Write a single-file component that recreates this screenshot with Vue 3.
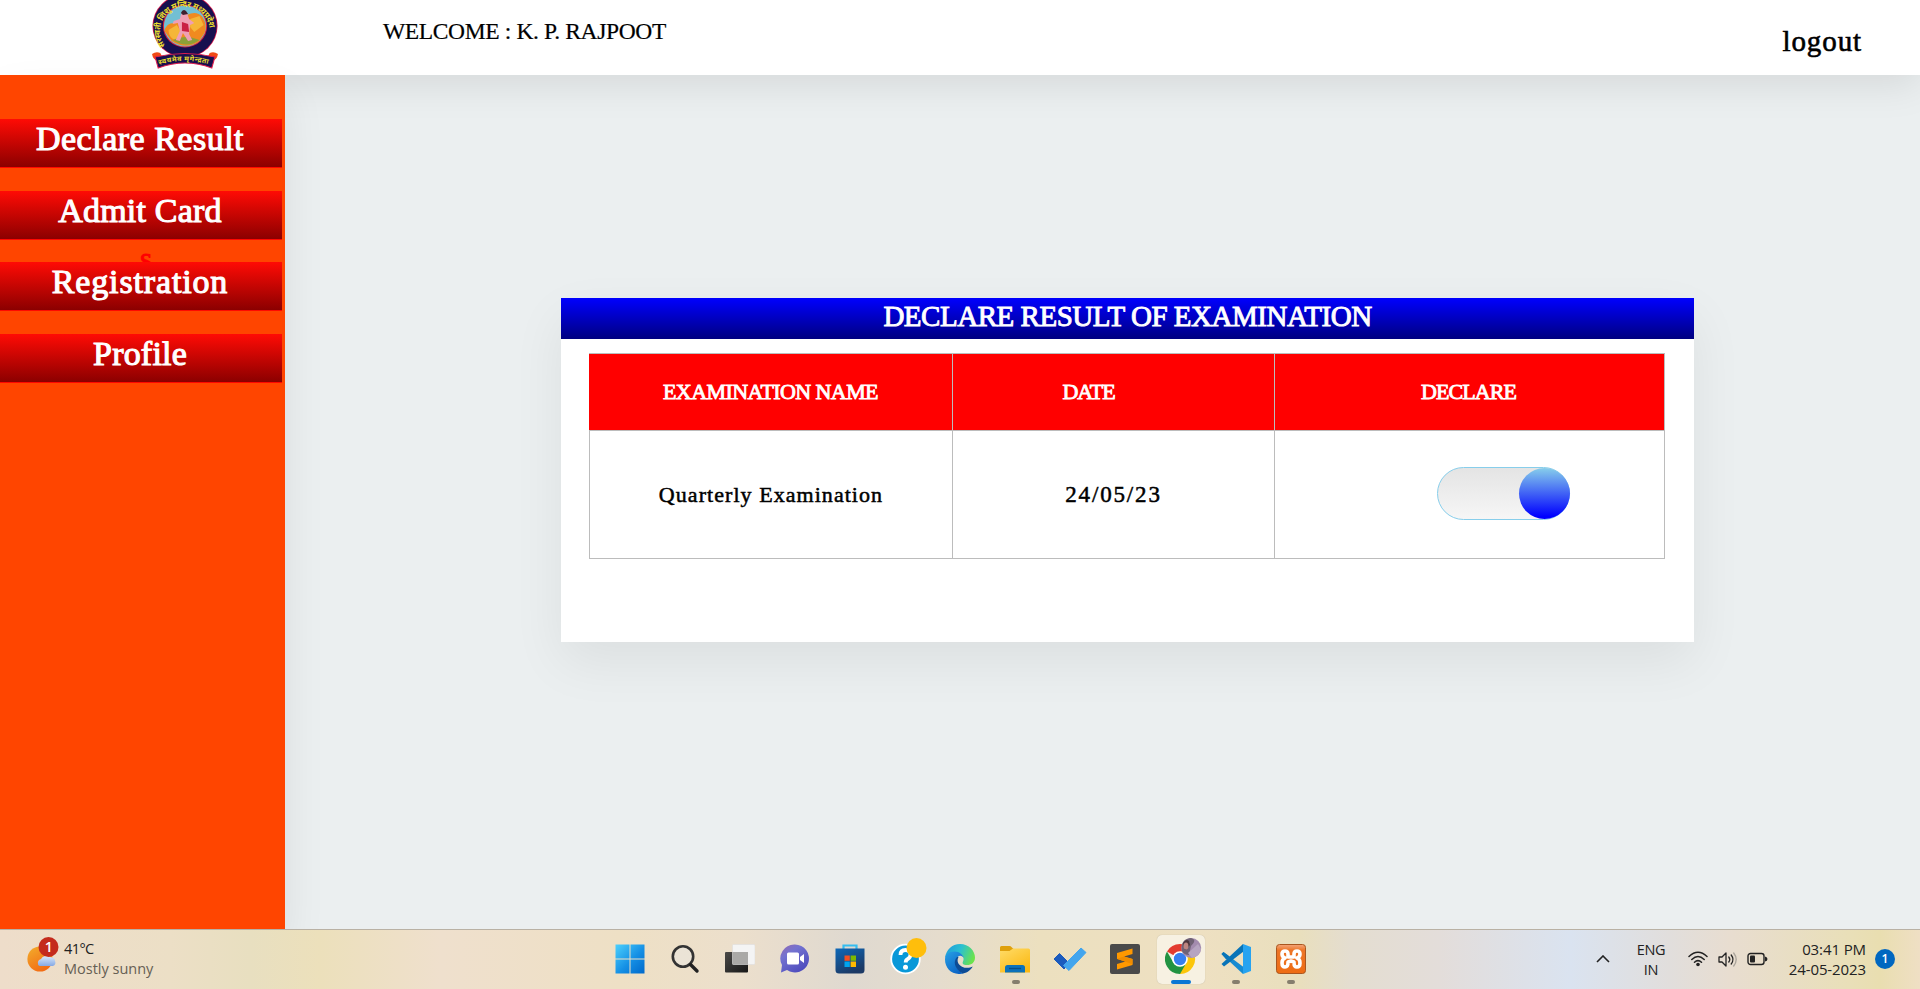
<script setup>
const menu = [
  { label: 'Declare Result', cls: 'm1' },
  { label: 'Admit Card', cls: 'm2' },
  { label: 'Registration', cls: 'm3' },
  { label: 'Profile', cls: 'm4' },
]
</script>

<template>
  <div class="page">
    <header class="top">
      <svg class="logo" width="68" height="70" viewBox="0 0 66 70" preserveAspectRatio="none">
        <defs>
          <path id="ring" d="M13.9 45.6A24 24 0 1 1 51.9 45.6" />
          <path id="band" d="M8 65Q33 57 59 65" />
        </defs>
        <circle cx="33" cy="26" r="31.6" fill="#d8174a" />
        <circle cx="33" cy="26" r="30.8" fill="#17104f" />
        <circle cx="33" cy="26" r="21.5" fill="#d91c3a" />
        <circle cx="33" cy="26" r="20.5" fill="#72bfd3" />
        <path d="M13 31Q15 22 24 23L35 15Q44 10 50 17Q55 25 52 33L46 42Q33 50 20 41Z" fill="#f08a20" />
        <path d="M17 30l8-5 5 8-5 8q-8-3-8-11M38 19l9-3 4 9-9 7-4-5Z" fill="#f5b638" />
        <path d="M21 40q12-6 26 0-12 9-26 0" fill="#8ca038" />
        <path d="M29 15q2-5 6-2l2 6 5 4-4 2-1 9 3 6-4 1-5-8-3 8-4-1 4-9-2-8-5 1 1-3 6-2Z" fill="#ef9fb5" />
        <path d="M29 13q2-5 5-2l2 3-5 1Z" fill="#41202f" />
        <path d="M30 22l6 2 1 8-7-1Z" fill="#ca2045" />
        <text class="ring-text"><textPath href="#ring" textLength="88">सरस्वती शिशु मन्दिर मध्यप्रदेश</textPath></text>
        <path d="M1 54q4-3 8-1l3 6-6 1q-4 0-5-6M65 54q-4-3-8-1l-3 6 6 1q4 0 5-6" fill="#f04a16" />
        <path d="M4 57Q33 50 62 57L59 68Q33 58 7 68Z" fill="#17104f" stroke="#e01d4f" stroke-width="1" />
        <text class="band-text"><textPath href="#band" textLength="48">स्वयमेव मृगेन्द्रता</textPath></text>
      </svg>
      <div class="welcome">WELCOME : K. P. RAJPOOT</div>
      <a class="logout">logout</a>
    </header>

    <div class="body">
      <aside class="side">
        <span class="stray">s</span>
        <a v-for="m in menu" :key="m.label" class="btn" :class="m.cls"><span>{{ m.label }}</span></a>
      </aside>
      <main class="main">
        <section class="card">
          <h1><span>DECLARE RESULT OF EXAMINATION</span></h1>
          <div class="table">
            <div class="th c1">EXAMINATION NAME</div>
            <div class="th c2">DATE</div>
            <div class="th c3">DECLARE</div>
            <div class="td q">Quarterly Examination</div>
            <div class="td d">24/05/23</div>
            <div class="td t"><div class="toggle"><i></i></div></div>
          </div>
        </section>
      </main>
    </div>

    <footer class="bar">
      <div class="weather">
        <svg width="34" height="38" viewBox="0 0 34 38">
          <defs>
            <linearGradient id="sun" x1="0" y1="0" x2=".6" y2="1"><stop offset="0" stop-color="#f2ae2c" /><stop offset="1" stop-color="#f36b14" /></linearGradient>
            <linearGradient id="cl" x1="0" y1="0" x2="0" y2="1"><stop offset="0" stop-color="#dcebfb" /><stop offset="1" stop-color="#86a9e4" /></linearGradient>
          </defs>
          <circle cx="14" cy="23" r="12.6" fill="url(#sun)" />
          <path d="M12 28a4 4 0 0 1 3-5 6 6 0 0 1 9-2q5 0 5 4a3.400 3.400 0 0 1-2 5H15q-3 0-3-2" fill="url(#cl)" />
          <circle cx="22.500" cy="11" r="10" fill="#c42b1c" />
          <text x="22.700" y="16" text-anchor="middle" class="badge">1</text>
        </svg>
        <div class="wtext"><b>41°C</b><span>Mostly sunny</span></div>
      </div>

      <div class="apps">
        <div class="app">
          <svg width="30" height="30" viewBox="0 0 30 30">
            <defs><linearGradient id="win" x1="0" y1="0" x2="1" y2="1"><stop offset="0" stop-color="#4cd0fc" /><stop offset=".55" stop-color="#1590e5" /><stop offset="1" stop-color="#0069cb" /></linearGradient></defs>
            <path d="M.5.500h14v14H.5zM15.500.500h14v14h-14zM.5 15.500h14v14H.5zM15.500 15.500h14v14h-14z" fill="url(#win)" />
          </svg>
        </div>
        <div class="app">
          <svg width="30" height="30" viewBox="0 0 30 30"><circle cx="13" cy="12.500" r="10.200" fill="#e9e6df" fill-opacity=".6" stroke="#333" stroke-width="2.600" /><path d="M20.500 20.500l6.500 6.500" stroke="#222" stroke-width="3.400" stroke-linecap="round" /></svg>
        </div>
        <div class="app">
          <svg width="30" height="30" viewBox="0 0 30 30">
            <defs><linearGradient id="tv" x1="0" y1="0" x2="1" y2="1"><stop offset="0" stop-color="#4b4a48" /><stop offset="1" stop-color="#171717" /></linearGradient></defs>
            <rect x="0" y="8" width="23" height="20.500" rx="1" fill="url(#tv)" /><rect x="7.500" y=".5" width="22.500" height="20" rx="1" fill="#f4f4f4" stroke="#ddd" stroke-width=".6" /><rect x="7.500" y="8" width="15.500" height="12.500" fill="#aaa9a7" />
          </svg>
        </div>
        <div class="app">
          <svg width="30" height="30" viewBox="0 0 30 30">
            <defs><linearGradient id="chat" x1="0" y1="0" x2=".7" y2="1"><stop offset="0" stop-color="#9569b0" /><stop offset=".35" stop-color="#7473d0" /><stop offset="1" stop-color="#4d4bbd" /></linearGradient></defs>
            <path d="M15 .5a14 14 0 1 1-8 25.500L1 28.500 2 21A14 14 0 0 1 15 .5" fill="url(#chat)" /><rect x="7" y="8.500" width="12" height="12" rx="1.500" fill="#fff" /><path d="M20 13l4-3v9l-4-3Z" fill="#fff" />
          </svg>
        </div>
        <div class="app">
          <svg width="30" height="30" viewBox="0 0 30 30">
            <defs><linearGradient id="store" x1="0" y1="0" x2=".5" y2="1"><stop offset="0" stop-color="#0d68b8" /><stop offset="1" stop-color="#1c3965" /></linearGradient></defs>
            <path d="M8.500 6V1.500h13V6" fill="none" stroke="#35bdf0" stroke-width="2.200" /><path d="M.5 4.500h29V26q0 3.500-3.500 3.500H4Q.5 29.500.5 26Z" fill="url(#store)" />
            <path d="M9.500 11.500h5.300v5.300H9.500z" fill="#f25022" /><path d="M15.600 11.500H21v5.300h-5.400z" fill="#7fba00" /><path d="M9.500 17.500h5.300V23H9.500z" fill="#00a4ef" /><path d="M15.600 17.500H21V23h-5.400z" fill="#ffb900" />
          </svg>
        </div>
        <div class="app">
          <svg class="help" width="38" height="38" viewBox="0 0 38 38">
            <circle cx="15.500" cy="22" r="14.300" fill="#0998d8" stroke="#fff" stroke-width="1.800" />
            <path d="M10.500 18q0-5 5-5t5 4.500q0 3-2.800 4.500-2 1-2 3.500" fill="none" stroke="#fff" stroke-width="3.800" /><circle cx="15.500" cy="30.300" r="2.500" fill="#fff" />
            <circle cx="26.500" cy="11" r="10" fill="#ffbe0b" />
          </svg>
        </div>
        <div class="app">
          <svg width="30" height="30" viewBox="0 0 30 30">
            <defs>
              <linearGradient id="e1" x1="0" y1=".2" x2="1" y2=".5"><stop offset="0" stop-color="#1e9bdc" /><stop offset=".5" stop-color="#2bc0d0" /><stop offset="1" stop-color="#6be34b" /></linearGradient>
              <linearGradient id="e2" x1="0" y1="0" x2=".7" y2="1"><stop offset="0" stop-color="#27a0e6" /><stop offset="1" stop-color="#0b62c4" /></linearGradient>
            </defs>
            <path d="M0 14C1 6 7 0 15 0c9 0 15 7 15 13.500 0 5-3.500 7.500-8 7.500-4 0-5-1.500-4-3.500 2-4-1-8.500-6.500-8.500C6 9 2 11 0 14" fill="url(#e1)" />
            <path d="M0 15.500C0 11 4 7.500 9.500 7.500c5 0 9 3.500 9.500 7-1-2.500-4-3.500-5.800-2-4.700 4-3.700 12 5.300 17C8 32 0 25 0 15.500" fill="url(#e2)" />
            <path d="M12 13c-4 4-3 12 6 16.500 5-.8 8-4 9.700-7-2.700 1.500-7 2-10.700.2-4-2-5.500-6-3.500-9.700" fill="#0d4c96" />
          </svg>
        </div>
        <div class="app">
          <svg width="30" height="30" viewBox="0 0 30 30">
            <defs><linearGradient id="fold" x1="0" y1="0" x2=".7" y2="1"><stop offset="0" stop-color="#ffdc68" /><stop offset="1" stop-color="#fbb914" /></linearGradient></defs>
            <path d="M0 9V3.500Q0 2 1.500 2h8q1.200 0 2.200 1.200L13.500 5 9 9Z" fill="#dfa00b" /><path d="M0 7h9.500l3.500-2.500h15.500q1.500 0 1.500 1.500v22.500H0Z" fill="url(#fold)" />
            <path d="M5 28.500v-5Q5 21 7.500 21h15q2.500 0 2.500 2.500v5Z" fill="#0c72ba" /><path d="M9 24.500h12" stroke="#074e88" stroke-width="1.400" />
          </svg><u></u>
        </div>
        <div class="app">
          <svg width="34" height="30" viewBox="0 0 34 30"><path d="M1 15l5.500-5.500 10 10L11 25Z" fill="#1b5bbd" stroke="#1b5bbd" stroke-linejoin="round" /><path d="M10.500 21.500L28 4l5 4.500-17 18Z" fill="#43a5ed" stroke="#43a5ed" stroke-linejoin="round" /></svg>
        </div>
        <div class="app">
          <svg width="30" height="30" viewBox="0 0 30 30"><rect width="30" height="30" rx="2" fill="#4a4a4a" /><path d="M7 9l15.500-4.500V10L14 12.500l8.500 2.500v6L7 25.500V20l8.500-2.500L7 15Z" fill="#ff9800" /><path d="M7 14.800l15.500 5.500V15L14 12.500Z" fill="#f08c00" /></svg>
        </div>
        <div class="app active">
          <svg class="chrome" width="38" height="38" viewBox="0 0 38 38">
            <path d="M15 22L2 14.500A15 15 0 0 1 28 14.500Z" fill="#e33b2e" /><path d="M15 22V14.500H28A15 15 0 0 1 15 37Z" fill="#fcc60a" /><path d="M15 22L21.500 25.700 15 37A15 15 0 0 1 2 14.500L8.500 25.700Z" fill="#229342" />
            <circle cx="15" cy="22" r="7.800" fill="#fff" /><circle cx="15" cy="22" r="6.200" fill="#367ff0" />
            <circle cx="26.200" cy="11" r="10" fill="#a38bae" /><path d="M17 14q-2-11 8-13 8 1 1 8l-2 9q-5 0-7-4" fill="#706275" /><path d="M18 6q3-5 6-2l1 4-5 5Z" fill="#4d353b" /><ellipse cx="21" cy="9" rx="2.400" ry="3.500" fill="#bd8581" /><path d="M23 16l10-9 3 5q-2 8-9 9Z" fill="#b6a4c1" />
          </svg><u></u>
        </div>
        <div class="app">
          <svg width="30" height="30" viewBox="0 0 30 30"><path d="M.5 10l2-2 20 15-.5 7Z" fill="#168bd2" /><path d="M.5 20L22 0l.5 7.500L3 22.500Z" fill="#0874b8" /><path d="M.5 10l2-2 6 4.500-3.300 3Z" fill="#0874b8" /><path d="M22 0l8 3v24l-8 3Z" fill="#27a3f0" /></svg><u></u>
        </div>
        <div class="app">
          <svg width="30" height="30" viewBox="0 0 30 30"><defs><linearGradient id="xa" x1="0" y1="0" x2="0" y2="1"><stop offset="0" stop-color="#f4a77c" /><stop offset=".2" stop-color="#ed7526" /><stop offset="1" stop-color="#ee6c13" /></linearGradient></defs>
            <rect x=".5" y=".5" width="29" height="29" rx="3" fill="url(#xa)" stroke="#a9561f" />
            <path d="M12 13V10Q12 7 9 7T6 10t3 4q-3 1-3 5t3 4 3-4v-1l3-1 3 1v1q0 4 3 4t3-4-3-5q3-1 3-4t-3-3-3 3v3Z" fill="none" stroke="#fff" stroke-width="3.600" stroke-linejoin="round" />
          </svg><u></u>
        </div>
      </div>

      <div class="tray">
        <svg class="chev" width="14" height="8" viewBox="0 0 14 8"><path d="M1 7l6-6 6 6" fill="none" stroke="#222" stroke-width="1.600" /></svg>
        <div class="lang">ENG<br />IN</div>
        <svg class="wifi" width="20" height="16" viewBox="0 0 20 16"><g fill="none" stroke="#222" stroke-width="1.500" stroke-linecap="round"><path d="M1 5.500Q10-3 19 5.500M3.800 8.500Q10 2.500 16.200 8.500M6.500 11.300Q10 8 13.500 11.300" /></g><circle cx="10" cy="13.500" r="1.800" fill="#222" /></svg>
        <svg class="vol" width="20" height="18" viewBox="0 0 20 18"><g fill="none" stroke="#222" stroke-width="1.300" stroke-linejoin="round" stroke-linecap="round"><path d="M1 6h3l4-4v13l-4-4H1ZM10.800 6q2 2.500 0 5M13.200 4q3.500 4.500 0 9" /><path d="M15.700 2q5 6.500 0 13" stroke="#aaa49b" /></g></svg>
        <svg class="bat" width="21" height="14" viewBox="0 0 21 14"><rect x="1" y="1.500" width="16" height="11" rx="2.500" fill="none" stroke="#222" stroke-width="1.400" /><rect x="3" y="3.500" width="5" height="7" rx="1" fill="#222" /><path d="M18 4.500q2.500.5 2.500 2.500T18 9.500Z" fill="#222" /></svg>
        <div class="clock">03:41 PM<br />24-05-2023</div>
        <div class="note">1</div>
      </div>
    </footer>
  </div>
</template>

<style>
body { margin: 0; overflow: hidden; }
</style>

<style scoped>
.page { width: 1920px; height: 989px; display: flex; flex-direction: column; overflow: hidden; background: #ebeff0; font-family: "Liberation Serif", serif; color: #000; }
.page * { box-sizing: border-box; }
svg { display: block; flex: none; }
.top { height: 75px; flex: none; display: flex; align-items: flex-start; background: #fff; box-shadow: 0 8px 40px rgba(0, 0, 0, .1); }
.logo { margin-left: 151px; }
.ring-text { font: bold 8px "Noto Sans", sans-serif; fill: #e9dd2e; }
.band-text { font: bold 7px "Noto Sans", sans-serif; fill: #e9dd2e; }
.welcome { margin: 17px 0 0 164px; font-size: 23.500px; line-height: 28px; letter-spacing: -.36px; -webkit-text-stroke: .2px #000; white-space: nowrap; }
.logout { margin: 24px 58px 0 auto; font-size: 29px; line-height: 34px; letter-spacing: .9px; -webkit-text-stroke: .6px #000; }

.body { height: 854px; flex: none; display: flex; }
.side { position: relative; width: 285px; padding-top: 44px; display: flex; flex-direction: column; gap: 22.600px; background: #ff4500; box-shadow: 0 20px 40px rgba(0, 0, 0, .08); }
.btn { position: relative; width: 282px; height: 49px; background: linear-gradient(#ff0b05, #8b0000); border-bottom: 1px solid #ff0800; color: #fff; font-size: 34px; line-height: 39px; text-align: center; -webkit-text-stroke: 1.100px #fff; }
.btn span { margin-right: 2px; }
.m1 { letter-spacing: .5px; }
.m2 { letter-spacing: .2px; }
.m3 { letter-spacing: .85px; }
.m4 { letter-spacing: .2px; }
.stray { position: absolute; left: 140px; top: 167px; font-size: 31px; line-height: 34px; color: #f00; -webkit-text-stroke: .9px #f00; }

.main { flex: 1; display: flex; align-items: flex-start; padding: 223px 0 0 276px; }
.card { width: 1133px; height: 344px; background: #fff; box-shadow: 0 20px 50px rgba(0, 0, 0, .065); }
h1 { margin: 0; height: 41px; background: linear-gradient(#00f, #000080); color: #fff; font-size: 29px; font-weight: 400; line-height: 37px; text-align: center; letter-spacing: -.47px; -webkit-text-stroke: .9px #fff; }
.table { margin: 14px 0 0 28px; width: 1076px; display: grid; grid-template-columns: 364px 322px 390px; grid-template-rows: 77px 128px; border: solid #bcbcbc; border-width: 1px 0 0; font-size: 22px; white-space: nowrap; }
.th { background: #f00; color: #fff; text-align: center; line-height: 76px; border: solid #bcbcbc; border-width: 0 1px 1px 0; -webkit-text-stroke: .85px #fff; }
.c1 { letter-spacing: -.58px; }
.c2 { letter-spacing: -1px; padding-right: 50px; }
.c3 { letter-spacing: -.95px; padding-right: 2px; }
.td { border: solid #bcbcbc; border-width: 0 1px 1px 0; line-height: 128px; text-align: center; -webkit-text-stroke: .5px #000; }
.q { border-left-width: 1px; letter-spacing: 1.050px; }
.d { font-size: 23px; letter-spacing: 1.850px; }
.t { padding: 36px 0 0 162px; }
.toggle { width: 133px; height: 53px; border: 1px solid #87ceeb; border-radius: 27px; background: linear-gradient(#e4e4e4, #f6f6f6); display: flex; justify-content: flex-end; }
.toggle i { width: 51px; height: 51px; margin-right: -1px; border-radius: 50%; background: linear-gradient(#87ceeb, #00f 95%); }

.bar { position: relative; height: 60px; flex: none; display: grid; grid-template-columns: 602px 715px 603px; border-top: 1px solid #b9b1a4; background: linear-gradient(90deg, #eeddca 0, #ecdfc6 170px, #e8dfc0 250px, #ece0bb 320px, #efe0cd 440px, #eee0c5 620px, #ecdfcc 740px, #dfd9d0 850px, #e5dccd 940px, #ece0bf 1040px, #eee0c2 1200px, #e9dfbd 1300px, #e4ddd0 1350px, #e3ddda 1440px, #dae3f0 1570px, #e1dedc 1670px, #e8ddd0 1730px, #e9dfb8 1850px, #e9deb0 1880px, #efdfc4 1920px); font-family: "Open Sans", "Noto Sans", sans-serif; color: #222; }
.weather { display: flex; padding: 6px 0 0 26px; }
.badge { font: 600 14px "Open Sans", sans-serif; fill: #fff; }
.wtext { display: flex; flex-direction: column; margin: 3px 0 0 4px; font-size: 14.500px; line-height: 20px; white-space: nowrap; }
.wtext b { font-weight: 400; letter-spacing: -.6px; }
.wtext span { color: #666054; }
.apps { display: grid; grid-template-columns: repeat(13, 55.1px); }
.app { position: relative; height: 59px; display: flex; align-items: center; justify-content: center; padding-bottom: 1px; }
.app u { position: absolute; left: 24px; top: 50px; width: 8px; height: 3.500px; border-radius: 2px; background: #857e6d; }
.app.active::before { content: ""; position: absolute; left: 4px; top: 5px; width: 48px; height: 49px; border-radius: 5px; background: #f7f1e2; box-shadow: 0 0 1px #b6ad98; }
.app.active u { left: 18px; width: 20px; background: #0a77d4; }
.active svg { position: relative; }
.help, .chrome { margin: -7px 0 0 8px; }
.tray { display: flex; align-items: flex-start; font-size: 14.500px; line-height: 20px; }
.chev { margin: 25px 0 0 279px; }
.lang { margin: 10px 0 0 24px; width: 34px; text-align: center; letter-spacing: -.3px; }
.wifi { margin: 21px 0 0 20px; }
.vol { margin: 21px 0 0 10px; }
.bat { margin: 22px 0 0 9px; }
.clock { margin: 9px 0 0 12px; width: 86px; text-align: right; font-size: 15px; letter-spacing: -.1px; white-space: nowrap; }
.note { margin: 19px 0 0 9px; width: 20px; height: 20px; border-radius: 50%; background: #0067c0; color: #fff; font-size: 12px; font-weight: 600; text-align: center; line-height: 20px; }
</style>
